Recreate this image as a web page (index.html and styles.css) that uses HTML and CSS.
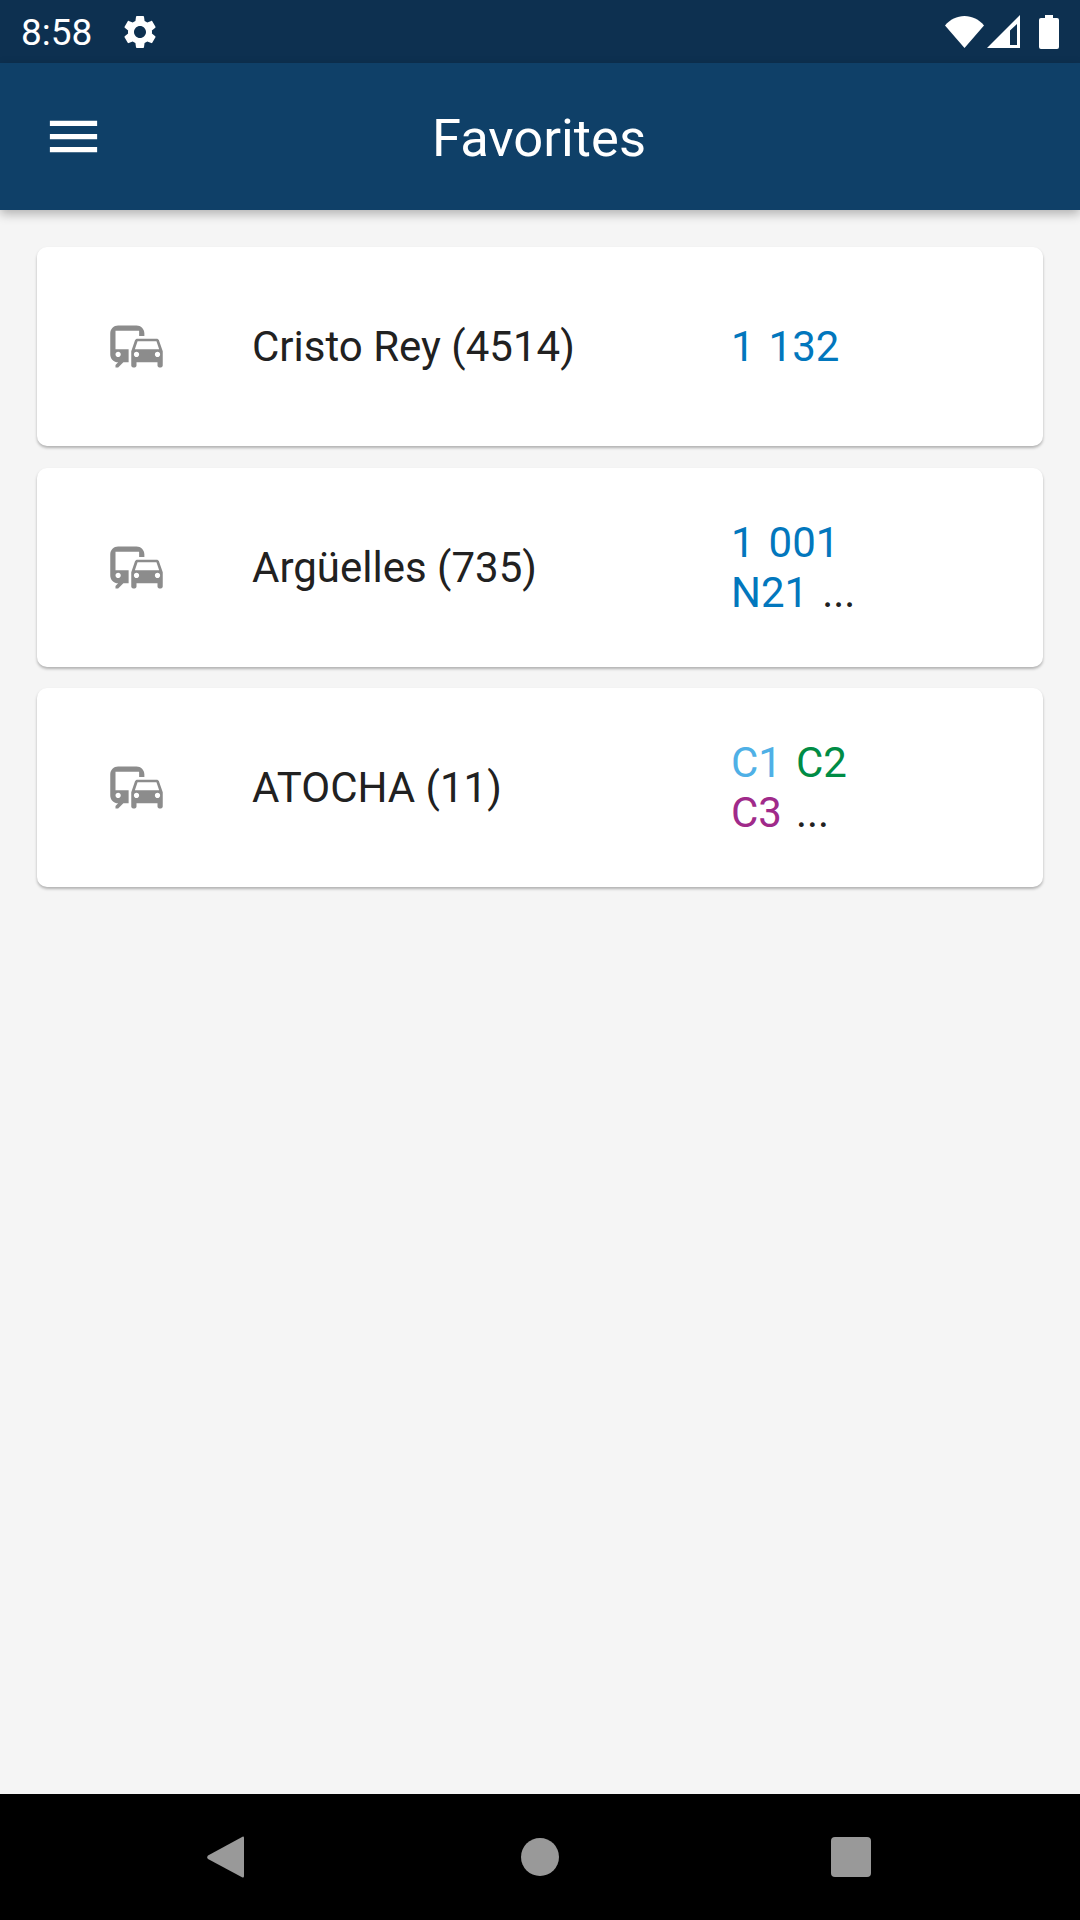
FILE: index.html
```html
<!DOCTYPE html>
<html lang="en">
<head>
<meta charset="utf-8">
<title>Favorites</title>
<link rel="stylesheet" href="styles.css">
</head>
<body>
<div class="phone">
  <header class="status">
    <span class="time">8:58</span>
    <svg class="gear" viewBox="0 0 24 24"><path d="M19.14 12.94c.04-.3.06-.61.06-.94 0-.32-.02-.64-.07-.94l2.03-1.58c.18-.14.23-.41.12-.61l-1.92-3.32c-.12-.22-.37-.29-.59-.22l-2.39.96c-.5-.38-1.03-.7-1.62-.94l-.36-2.54c-.04-.24-.24-.41-.48-.41h-3.84c-.24 0-.43.17-.47.41l-.36 2.54c-.59.24-1.13.57-1.62.94l-2.39-.96c-.22-.08-.47 0-.59.22L2.74 8.87c-.12.21-.08.47.12.61l2.03 1.58c-.05.3-.09.63-.09.94s.02.64.07.94l-2.03 1.58c-.18.14-.23.41-.12.61l1.92 3.32c.12.22.37.29.59.22l2.39-.96c.5.38 1.03.7 1.62.94l.36 2.54c.05.24.24.41.48.41h3.84c.24 0 .44-.17.47-.41l.36-2.54c.59-.24 1.13-.56 1.62-.94l2.39.96c.22.08.47 0 .59-.22l1.92-3.32c.12-.22.07-.47-.12-.61l-2.01-1.58zM12 15.6c-1.98 0-3.6-1.62-3.6-3.6s1.62-3.6 3.6-3.6 3.6 1.62 3.6 3.6-1.62 3.6-3.6 3.6z"/></svg>
    <span class="spacer"></span>
    <svg class="wifi" viewBox="0 0 39 32"><path d="M0 9.5C5 3.5 12 0 19.500 0S34 3.500 39 9.500L19.500 32z"/></svg>
    <svg class="signal" viewBox="0 0 33 33"><path fill-rule="evenodd" d="M33 0v33H0zM30 9l-7 6.500V30h7z"/></svg>
    <svg class="battery" viewBox="0 0 20 34"><path d="M6 0h8v3h4a2 2 0 0 1 2 2v27a2 2 0 0 1-2 2H2a2 2 0 0 1-2-2V5a2 2 0 0 1 2-2h4z"/></svg>
  </header>
  <div class="appbar">
    <svg class="menu" viewBox="0 0 24 24"><path d="M3 18h18v-2H3v2zm0-5h18v-2H3v2zm0-7v2h18V6H3z"/></svg>
    <h1 class="title">Favorites</h1>
    <span></span>
  </div>
  <main class="list">
    <article class="card">
      <svg class="commute" viewBox="0 0 24 24"><path d="M12 4H5C3.340 4 2 5.340 2 7v8c0 1.660 1.340 3 3 3l-1 1v1h1l2-2h2v-5H4V6h9v2h2V7c0-1.660-1.340-3-3-3zM5 16c-.55 0-1-.45-1-1s.45-1 1-1 1 .45 1 1-.45 1-1 1zm15.570-6.340c-.14-.4-.52-.66-.97-.66h-7.190c-.46 0-.83.26-.98.66L10 13.770l.01 5.510c0 .38.31.72.69.72h.62c.38 0 .68-.38.68-.76V18h8v1.240c0 .38.31.76.69.76h.61c.38 0 .69-.34.69-.72l.01-1.370v-4.140l-1.430-4.070zm-8.160.34h7.190l1.030 3h-9.250l1.030-3zM12 16c-.55 0-1-.45-1-1s.45-1 1-1 1 .45 1 1-.45 1-1 1zm8 0c-.55 0-1-.45-1-1s.45-1 1-1 1 .45 1 1-.45 1-1 1z"/></svg>
      <span class="name">Cristo Rey (4514)</span>
      <div class="lines">
        <div class="row"><span class="bus">1</span><span class="bus">132</span></div>
      </div>
    </article>
    <article class="card">
      <svg class="commute" viewBox="0 0 24 24"><path d="M12 4H5C3.340 4 2 5.340 2 7v8c0 1.660 1.340 3 3 3l-1 1v1h1l2-2h2v-5H4V6h9v2h2V7c0-1.660-1.340-3-3-3zM5 16c-.55 0-1-.45-1-1s.45-1 1-1 1 .45 1 1-.45 1-1 1zm15.570-6.340c-.14-.4-.52-.66-.97-.66h-7.190c-.46 0-.83.26-.98.66L10 13.770l.01 5.510c0 .38.31.72.69.72h.62c.38 0 .68-.38.68-.76V18h8v1.240c0 .38.31.76.69.76h.61c.38 0 .69-.34.69-.72l.01-1.370v-4.140l-1.430-4.070zm-8.160.34h7.190l1.030 3h-9.250l1.030-3zM12 16c-.55 0-1-.45-1-1s.45-1 1-1 1 .45 1 1-.45 1-1 1zm8 0c-.55 0-1-.45-1-1s.45-1 1-1 1 .45 1 1-.45 1-1 1z"/></svg>
      <span class="name">Argüelles (735)</span>
      <div class="lines">
        <div class="row"><span class="bus">1</span><span class="bus">001</span></div>
        <div class="row"><span class="bus">N21</span><span class="more">...</span></div>
      </div>
    </article>
    <article class="card">
      <svg class="commute" viewBox="0 0 24 24"><path d="M12 4H5C3.340 4 2 5.340 2 7v8c0 1.660 1.340 3 3 3l-1 1v1h1l2-2h2v-5H4V6h9v2h2V7c0-1.660-1.340-3-3-3zM5 16c-.55 0-1-.45-1-1s.45-1 1-1 1 .45 1 1-.45 1-1 1zm15.570-6.340c-.14-.4-.52-.66-.97-.66h-7.190c-.46 0-.83.26-.98.66L10 13.770l.01 5.510c0 .38.31.72.69.72h.62c.38 0 .68-.38.68-.76V18h8v1.240c0 .38.31.76.69.76h.61c.38 0 .69-.34.69-.72l.01-1.370v-4.140l-1.430-4.070zm-8.160.34h7.190l1.030 3h-9.250l1.030-3zM12 16c-.55 0-1-.45-1-1s.45-1 1-1 1 .45 1 1-.45 1-1 1zm8 0c-.55 0-1-.45-1-1s.45-1 1-1 1 .45 1 1-.45 1-1 1z"/></svg>
      <span class="name">ATOCHA (11)</span>
      <div class="lines">
        <div class="row"><span class="c1">C1</span><span class="c2">C2</span></div>
        <div class="row"><span class="c3">C3</span><span class="more">...</span></div>
      </div>
    </article>
  </main>
  <footer class="nav">
    <svg class="back" viewBox="0 0 37 42"><path d="M36 0.500Q37 0 37 2V40Q37 42 35.500 41.500L1 23Q-0.500 21 1 19.500Z"/></svg>
    <span class="home"></span>
    <span class="recent"></span>
  </footer>
</div>
</body>
</html>
```
FILE: styles.css
```css
* { box-sizing: border-box; }
html, body { margin: 0; padding: 0; }
body { font-family: Roboto, "Noto Sans", sans-serif; background: #f5f5f5; }
.phone { width: 1080px; height: 1920px; display: flex; flex-direction: column; overflow: hidden; }

.status { flex: 0 0 63px; background: #0d3050; color: #fff; display: flex; align-items: center; padding: 0 21px 0 21px; fill: #fff; }
.time { font-size: 37px; width: 83px; padding-top: 1px; }
.gear { width: 40px; height: 40px; margin-left: 16px; }
.spacer { flex: 1; }
.wifi { width: 39px; height: 32px; margin-right: 3px; }
.signal { width: 33px; height: 33px; margin-right: 19px; }
.battery { width: 20px; height: 34px; }

.appbar { flex: 0 0 147px; background: #0f4068; display: grid; grid-template-columns: 1fr auto 1fr; align-items: center; padding-left: 42px; padding-right: 44px; box-shadow: 0 4px 10px rgba(0,0,0,.28); position: relative; z-index: 1; }
.menu { width: 63px; height: 63px; fill: #fff; }
.title { margin: 2px 0 0; font-size: 52.500px; font-weight: 400; color: #fff; }

.list { flex: 1; padding: 37px 37px 0; display: flex; flex-direction: column; gap: 21.500px; }
.card { height: 199px; background: #fff; border-radius: 10px; box-shadow: 0 2px 3px rgba(0,0,0,.28); display: grid; grid-template-columns: 63px 84px 479px 1fr; align-items: center; padding-left: 68px; }
.commute { width: 63px; height: 63px; fill: #8c8c8c; grid-column: 1; }
.name { grid-column: 3; font-size: 42px; color: #212121; }
.lines { grid-column: 4; font-size: 42px; line-height: 50px; padding-top: 1px; }
.row { display: flex; gap: 14px; }
.bus { color: #0277bd; }
.c1 { color: #4fb0e6; }
.c2 { color: #008c45; }
.c3 { color: #a02a8a; }
.more { color: #212121; }

.nav { flex: 0 0 126px; background: #000; display: flex; align-items: center; padding-left: 207px; }
.back { width: 37px; height: 42px; fill: #999; }
.home { width: 38px; height: 38px; border-radius: 50%; background: #999; margin-left: 277px; }
.recent { width: 40px; height: 40px; border-radius: 4px; background: #999; margin-left: 272px; }
```
